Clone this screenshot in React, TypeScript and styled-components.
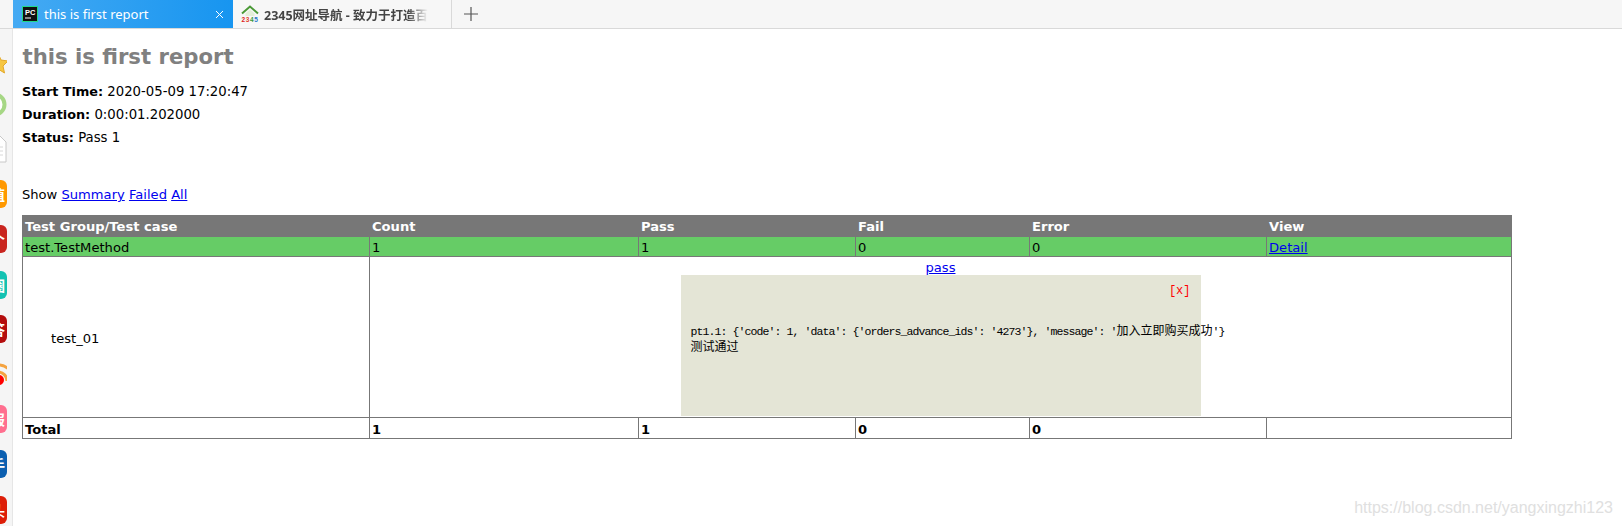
import React from "react";
import styled, { createGlobalStyle } from "styled-components";

const GlobalStyle = createGlobalStyle`
  html, body {
    margin: 0;
    padding: 0;
    background: #fff;
  }
  body {
    font-family: "DejaVu Sans", Verdana, sans-serif;
    font-size: 13.1px;
    color: #000;
  }
`;

const Page = styled.div`
  position: relative;
  width: 1622px;
  height: 526px;
  overflow: hidden;
  display: flex;
  flex-direction: column;
`;

const TabBar = styled.div`
  display: flex;
  align-items: stretch;
  height: 28px;
  padding-left: 13px;
  background: #f6f6f6;
  border-bottom: 1px solid #d9d9d9;
`;

const ActiveTab = styled.div`
  display: flex;
  align-items: center;
  width: 220px;
  box-sizing: border-box;
  padding: 0 9px 0 9px;
  color: #fff;
  background: linear-gradient(90deg, #45aaf3, #1795f0);
  font-family: "Noto Sans", sans-serif;
  font-size: 13px;
`;

const Tab = styled.div`
  display: flex;
  align-items: center;
  width: 219px;
  box-sizing: border-box;
  padding: 0 8px;
  color: #444;
  background: #f7f7f7;
  border-right: 1px solid #d9d9d9;
  font-family: "Noto Sans", "Noto Sans CJK SC", sans-serif;
  font-size: 12.5px;
  font-weight: 700;
  white-space: nowrap;
`;

const TabTitle = styled.span`
  flex: 1;
  margin-left: 6px;
`;

const FadingTitle = styled.span`
  margin-left: 5px;
  -webkit-mask-image: linear-gradient(90deg, #000 88%, transparent 100%);
  mask-image: linear-gradient(90deg, #000 88%, transparent 100%);
`;

const NewTab = styled.div`
  display: flex;
  align-items: center;
  margin-left: 12px;
`;

const Body = styled.div`
  flex: 1;
  display: flex;
  min-height: 0;
`;

const Sidebar = styled.div`
  flex: 0 0 13px;
  background: #f5f5f5;
  border-right: 1px solid #e6e6e6;
  box-sizing: border-box;
  overflow: hidden;
  display: flex;
  flex-direction: column;
  padding-top: 23px;
`;

const SideSlot = styled.div<{ $h: number }>`
  flex: 0 0 ${(p) => p.$h}px;
  display: flex;
  justify-content: flex-end;
  align-items: flex-start;
  width: 13px;
`;

const GlyphBox = styled.div<{ $w: number }>`
  flex: 0 0 ${(p) => p.$w}px;
  display: flex;
  margin-right: 6px;
  margin-left: ${(p) => 7 - p.$w}px;
`;

const AppIcon = styled.div<{ $bg: string }>`
  flex: 0 0 28px;
  height: 28px;
  box-sizing: border-box;
  padding-right: 2px;
  border-radius: 6px;
  background: ${(p) => p.$bg};
  color: #fff;
  font-family: "Noto Sans CJK SC", sans-serif;
  font-size: 14px;
  font-weight: 700;
  line-height: 28px;
  text-align: right;
  margin-right: 6px;
  margin-left: -21px;
  white-space: nowrap;
`;

const Content = styled.div`
  flex: 1;
  padding: 0 0 0 9px;
  min-width: 0;
`;

const Title = styled.h1`
  margin: 13px 0 0 0.5px;
  font-size: 21.2px;
  line-height: 29px;
  font-weight: 700;
  color: #808080;
`;

const Attributes = styled.div`
  margin-top: 9px;
`;

const Attribute = styled.p`
  margin: 0;
  height: 23px;
  line-height: 23px;
  font-size: 13.25px;
  strong {
    font-size: 12.8px;
    font-weight: 700;
  }
`;

const ShowLine = styled.div`
  margin-top: 37px;
  height: 18px;
  line-height: 18px;
  a {
    color: #0000ee;
    text-decoration: underline;
  }
`;

const ReportTable = styled.table`
  margin-top: 11px;
  width: 1489px;
  table-layout: fixed;
  border-collapse: collapse;
  border: 1px solid #777;
  font-size: 13.1px;
`;

const HeadRow = styled.tr`
  background: #777;
  color: #fff;
  font-weight: 700;
`;

const Cell = styled.td`
  border: 1px solid #777;
  padding: 3px 2px 1px;
  height: 15px;
  line-height: 15px;
  vertical-align: middle;
  a {
    color: #0000ee;
  }
`;

const HeadCell = styled.td`
  border: 1px solid #777;
  padding: 3px 2px 1px;
  height: 16px;
  line-height: 16px;
`;

const GroupRow = styled.tr`
  background: #66cc66;
`;

const TotalRow = styled.tr`
  font-weight: 700;
`;

const TotalCell = styled(Cell)`
  height: 16px;
`;

const CaseCell = styled(Cell)`
  padding-left: 28px;
`;

const DetailCell = styled.td`
  border: 1px solid #777;
  padding: 2px 0 1px;
  height: 156px;
  text-align: center;
  vertical-align: top;
  a {
    color: #0000ee;
  }
`;

const PassLink = styled.a`
  display: block;
  height: 16px;
  line-height: 18px;
`;

const Popup = styled.div`
  width: 520px;
  height: 141px;
  margin: 0 auto;
  box-sizing: border-box;
  padding: 10px;
  text-align: left;
  background: #e4e5d6;
  font-family: "Liberation Mono", monospace;
  font-size: 11.5px;
  letter-spacing: -0.9px;
`;

const CloseRow = styled.div`
  text-align: right;
  height: 15px;
  line-height: 12px;
  color: #f00;
  font-size: 12px;
  letter-spacing: 0;
`;

const PopupText = styled.pre`
  margin: 24px 0 0;
  font: inherit;
  letter-spacing: inherit;
  line-height: 14.5px;
  white-space: pre;
`;

const Cjk = styled.span`
  font-family: "Noto Sans CJK SC", sans-serif;
  font-size: 12px;
  line-height: 1;
  letter-spacing: 0;
`;

const Watermark = styled.div`
  position: absolute;
  right: 9px;
  bottom: 9px;
  color: #e0e0e0;
  font-family: "Liberation Sans", sans-serif;
  font-size: 16px;
  line-height: 18px;
`;

const PcLogo = () => (
  <svg width="16" height="16" viewBox="0 0 16 16">
    <rect x="0" y="0" width="16" height="16" fill="#21d789" />
    <rect x="1" y="1" width="14" height="14" fill="#111" />
    <text x="3" y="8.5" fill="#fff" fontSize="7.5" fontWeight="700" fontFamily="Liberation Sans">
      PC
    </text>
    <rect x="3" y="11.5" width="6" height="1" fill="#fff" />
  </svg>
);

const HomeLogo = () => (
  <svg width="18" height="18" viewBox="0 0 18 18">
    <path d="M1 8.5 L9 1.5 L17 8.5" fill="none" stroke="#4b9a37" strokeWidth="2" />
    <path d="M4.5 8.5 L9 4.5 L13.5 8.5 V11 H4.5 Z" fill="#e3efd9" />
    <text y="17" fontSize="6.5" fontWeight="700" fontFamily="Liberation Sans" fill="#d22">
      <tspan x="0.5">2</tspan>
      <tspan x="4.8" fill="#e2452c">3</tspan>
      <tspan x="9" fill="#3a9a3a">4</tspan>
      <tspan x="13.2" fill="#2a78c8">5</tspan>
    </text>
  </svg>
);

const CloseGlyph = () => (
  <svg width="9" height="9" viewBox="0 0 9 9" stroke="#fff" strokeWidth="1">
    <path d="M1 1 L8 8 M8 1 L1 8" />
  </svg>
);

const PlusGlyph = () => (
  <svg width="14" height="14" viewBox="0 0 14 14" stroke="#555" strokeWidth="1.2">
    <path d="M7 0 V14 M0 7 H14" />
  </svg>
);

const StarGlyph = () => (
  <svg width="22" height="22" viewBox="0 0 22 22">
    <path d="M13 1 L16 8 L23 9 L18 14 L19.5 21 L13 17 L6.5 21 L8 14 L3 9 L10 8 Z" fill="#f6c642" stroke="#e3a92b" />
  </svg>
);

const RingGlyph = () => (
  <svg width="25" height="25" viewBox="0 0 25 25">
    <circle cx="12.5" cy="12.5" r="10" fill="#fff" stroke="#a6d785" strokeWidth="4" />
  </svg>
);

const DocGlyph = () => (
  <svg width="20" height="28" viewBox="0 0 20 28">
    <path d="M1 1 H13 L19 7 V27 H1 Z" fill="#fff" stroke="#c8c8c8" />
    <path d="M4 12 H16 M4 16 H16 M4 20 H16" stroke="#d8d8d8" />
  </svg>
);

const RssGlyph = () => (
  <svg width="24" height="24" viewBox="0 0 24 24">
    <circle cx="16" cy="17" r="5" fill="#f00" />
    <path d="M15 9 A9 9 0 0 1 24 18 M15 2 A16 16 0 0 1 31 18" fill="none" stroke="#f4a340" strokeWidth="3" />
  </svg>
);

export default function App() {
  return (
    <>
      <GlobalStyle />
      <Page>
        <TabBar>
          <ActiveTab>
            <PcLogo />
            <TabTitle>this is first report</TabTitle>
            <CloseGlyph />
          </ActiveTab>
          <Tab>
            <HomeLogo />
            <FadingTitle>2345网址导航 - 致力于打造百</FadingTitle>
          </Tab>
          <NewTab>
            <PlusGlyph />
          </NewTab>
        </TabBar>
        <Body>
          <Sidebar>
            <SideSlot $h={40}><GlyphBox $w={22}><StarGlyph /></GlyphBox></SideSlot>
            <SideSlot $h={43}><GlyphBox $w={25}><RingGlyph /></GlyphBox></SideSlot>
            <SideSlot $h={45}><GlyphBox $w={20}><DocGlyph /></GlyphBox></SideSlot>
            <SideSlot $h={45}><AppIcon $bg="#ff9800">值</AppIcon></SideSlot>
            <SideSlot $h={46}><AppIcon $bg="#c9251f">个</AppIcon></SideSlot>
            <SideSlot $h={44}><AppIcon $bg="#12c2b2">圈</AppIcon></SideSlot>
            <SideSlot $h={48}><AppIcon $bg="#b40d0d">答</AppIcon></SideSlot>
            <SideSlot $h={42}><GlyphBox $w={24}><RssGlyph /></GlyphBox></SideSlot>
            <SideSlot $h={45}><AppIcon $bg="#ff6f8f">报</AppIcon></SideSlot>
            <SideSlot $h={46}><AppIcon $bg="#0b5fb0">手</AppIcon></SideSlot>
            <SideSlot $h={30}><AppIcon $bg="#dd1e08">头</AppIcon></SideSlot>
          </Sidebar>
          <Content>
            <Title>this is first report</Title>
            <Attributes>
              <Attribute><strong>Start Time:</strong> 2020-05-09 17:20:47</Attribute>
              <Attribute><strong>Duration:</strong> 0:00:01.202000</Attribute>
              <Attribute><strong>Status:</strong> Pass 1</Attribute>
            </Attributes>
            <ShowLine>
              Show <a href="#">Summary</a> <a href="#">Failed</a> <a href="#">All</a>
            </ShowLine>
            <ReportTable>
              <colgroup>
                <col style={{ width: 347 }} />
                <col style={{ width: 269 }} />
                <col style={{ width: 217 }} />
                <col style={{ width: 174 }} />
                <col style={{ width: 237 }} />
                <col style={{ width: 245 }} />
              </colgroup>
              <tbody>
                <HeadRow>
                  <HeadCell>Test Group/Test case</HeadCell>
                  <HeadCell>Count</HeadCell>
                  <HeadCell>Pass</HeadCell>
                  <HeadCell>Fail</HeadCell>
                  <HeadCell>Error</HeadCell>
                  <HeadCell>View</HeadCell>
                </HeadRow>
                <GroupRow>
                  <Cell>test.TestMethod</Cell>
                  <Cell>1</Cell>
                  <Cell>1</Cell>
                  <Cell>0</Cell>
                  <Cell>0</Cell>
                  <Cell><a href="#">Detail</a></Cell>
                </GroupRow>
                <tr>
                  <CaseCell>test_01</CaseCell>
                  <DetailCell colSpan={5}>
                    <PassLink href="#">pass</PassLink>
                    <Popup>
                      <CloseRow>[x]</CloseRow>
                      <PopupText>
                        {"pt1.1: {'code': 1, 'data': {'orders_advance_ids': '4273'}, 'message': '"}
                        <Cjk>加入立即购买成功</Cjk>
                        {"'}\n"}
                        <Cjk>测试通过</Cjk>
                      </PopupText>
                    </Popup>
                  </DetailCell>
                </tr>
                <TotalRow>
                  <TotalCell>Total</TotalCell>
                  <TotalCell>1</TotalCell>
                  <TotalCell>1</TotalCell>
                  <TotalCell>0</TotalCell>
                  <TotalCell>0</TotalCell>
                  <TotalCell>&nbsp;</TotalCell>
                </TotalRow>
              </tbody>
            </ReportTable>
          </Content>
        </Body>
        <Watermark>https://blog.csdn.net/yangxingzhi123</Watermark>
      </Page>
    </>
  );
}
